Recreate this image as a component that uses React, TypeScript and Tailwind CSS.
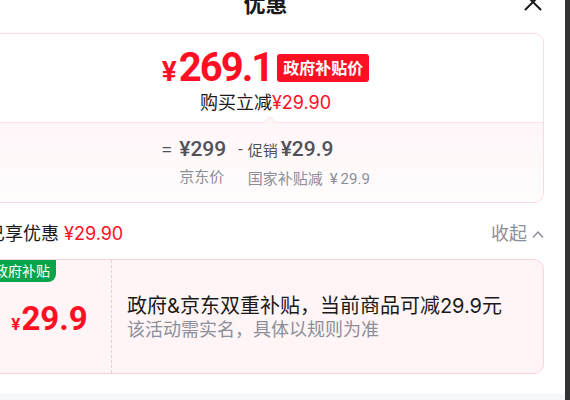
import React from "react";

export default function App() {
  return (
    <div className="flex w-[570px] h-[400px] overflow-hidden bg-white font-['Inter','Noto_Sans_CJK_SC',sans-serif]">
      <div className="w-[599px] -ml-[34px] shrink-0 flex flex-col bg-white">
        <div className="px-[21px] pb-[20px] flex flex-col">
          {/* Header */}
          <div className="-mt-[16px] h-[40px] grid grid-cols-[1fr_auto_1fr] items-center">
            <div />
            <div className="text-[22px] font-bold text-[#1a1a1a] leading-none">优惠</div>
            <div className="justify-self-end -mt-[4px] mr-[2px]">
              <svg width="18" height="18" viewBox="0 0 18 18">
                <path d="M1.5 1.5 L16.5 16.5 M16.5 1.5 L1.5 16.5" stroke="#1a1a1a" strokeWidth="2" strokeLinecap="round" />
              </svg>
            </div>
          </div>

          {/* Price card */}
          <div className="mt-[9px] border border-[#fcd9e1] rounded-[10px] overflow-hidden">
            <div className="flex flex-col items-center pt-[14px] pb-[7px] bg-white">
              <div className="flex items-center h-[40px] gap-[5px]">
                <div className="flex items-baseline text-[#ff0f23] font-bold leading-none font-['Roboto','Noto_Sans_CJK_SC',sans-serif]">
                  <span className="text-[28px]">¥</span>
                  <span className="text-[40px] tracking-[-2px] ml-[2px]">269.1</span>
                </div>
                <div className="h-[28px] px-[6px] rounded-[3px] bg-[#ff0f23] text-white font-bold text-[16px] flex items-center">
                  政府补贴价
                </div>
              </div>
              <div className="mt-[3px] text-[18px] leading-[24px] text-[#1a1a1a]">
                购买立减<span className="text-[#ff0f23]">¥29.90</span>
              </div>
            </div>
            <div className="relative border-t border-[#fde3e9] bg-gradient-to-b from-[#fff6f8] to-[#fffcfc] pt-[16px] pb-[13px] flex justify-center font-['Roboto','Noto_Sans_CJK_SC',sans-serif]">
              <div className="absolute -top-[5px] left-[278px] w-[8px] h-[8px] rotate-45 border-l border-t border-[#fde3e9] bg-[#fff6f8]" />
              <div className="flex items-start text-[#505259]">
                <span className="text-[20px] leading-[21px] font-light mr-[7px]">=</span>
                <div className="flex flex-col">
                  <span className="text-[21px] leading-[21px] font-medium">¥299</span>
                  <span className="mt-[7px] text-[15px] leading-[20px] text-[#8c8f99]">京东价</span>
                </div>
                <span className="text-[16px] leading-[21px] ml-[12px] mr-[5px]">-</span>
                <div className="flex flex-col">
                  <div className="flex items-baseline leading-[21px]">
                    <span className="text-[15px]">促销</span>
                    <span className="text-[21px] font-medium ml-[3px]">¥29.9</span>
                  </div>
                  <span className="mt-[7px] text-[15px] leading-[20px] text-[#8c8f99]">
                    国家补贴减<span className="ml-[7px]">¥</span><span className="ml-[3px]">29.9</span>
                  </span>
                </div>
              </div>
            </div>
          </div>

          {/* Section header */}
          <div className="mt-[19px] flex justify-between items-center text-[18px] leading-[24px]">
            <div className="text-[#1a1a1a]">
              已享优惠 <span className="text-[#ff0f23]">¥29.90</span>
            </div>
            <div className="flex items-center text-[#8c8f99]">
              收起
              <svg className="ml-[5px]" width="12" height="9" viewBox="0 0 12 9">
                <polyline points="1,7.5 6,2 11,7.5" fill="none" stroke="#8c8f99" strokeWidth="1.5" />
              </svg>
            </div>
          </div>

          {/* Coupon card */}
          <div className="mt-[13px] relative flex h-[115px] border border-[#fbd5dc] rounded-[10px] bg-[#fff5f6] overflow-hidden">
            <div className="absolute top-0 left-0 bg-[#0aa54b] text-white text-[14px] leading-[22px] px-[6px] rounded-br-[8px]">
              政府补贴
            </div>
            <div className="w-[124px] shrink-0 border-r border-dashed border-[#f8c8d2] flex items-center justify-center">
              <div className="flex items-baseline text-[#ff0f23] font-bold leading-none mt-[4px] font-['Roboto','Noto_Sans_CJK_SC',sans-serif]">
                <span className="text-[17px]">¥</span>
                <span className="text-[33px] ml-[1px]">29.9</span>
              </div>
            </div>
            <div className="flex-1 pl-[15px] flex flex-col justify-center pt-[2px]">
              <div className="text-[20px] leading-[24px] text-[#1a1a1a]">政府&amp;京东双重补贴，当前商品可减29.9元</div>
              <div className="text-[18px] leading-[24px] text-[#8c8f99]">该活动需实名，具体以规则为准</div>
            </div>
          </div>
        </div>
        <div className="flex-1 bg-[#f7f8fb]" />
      </div>
      <div className="w-[5px] shrink-0 bg-[#333333]" />
    </div>
  );
}
